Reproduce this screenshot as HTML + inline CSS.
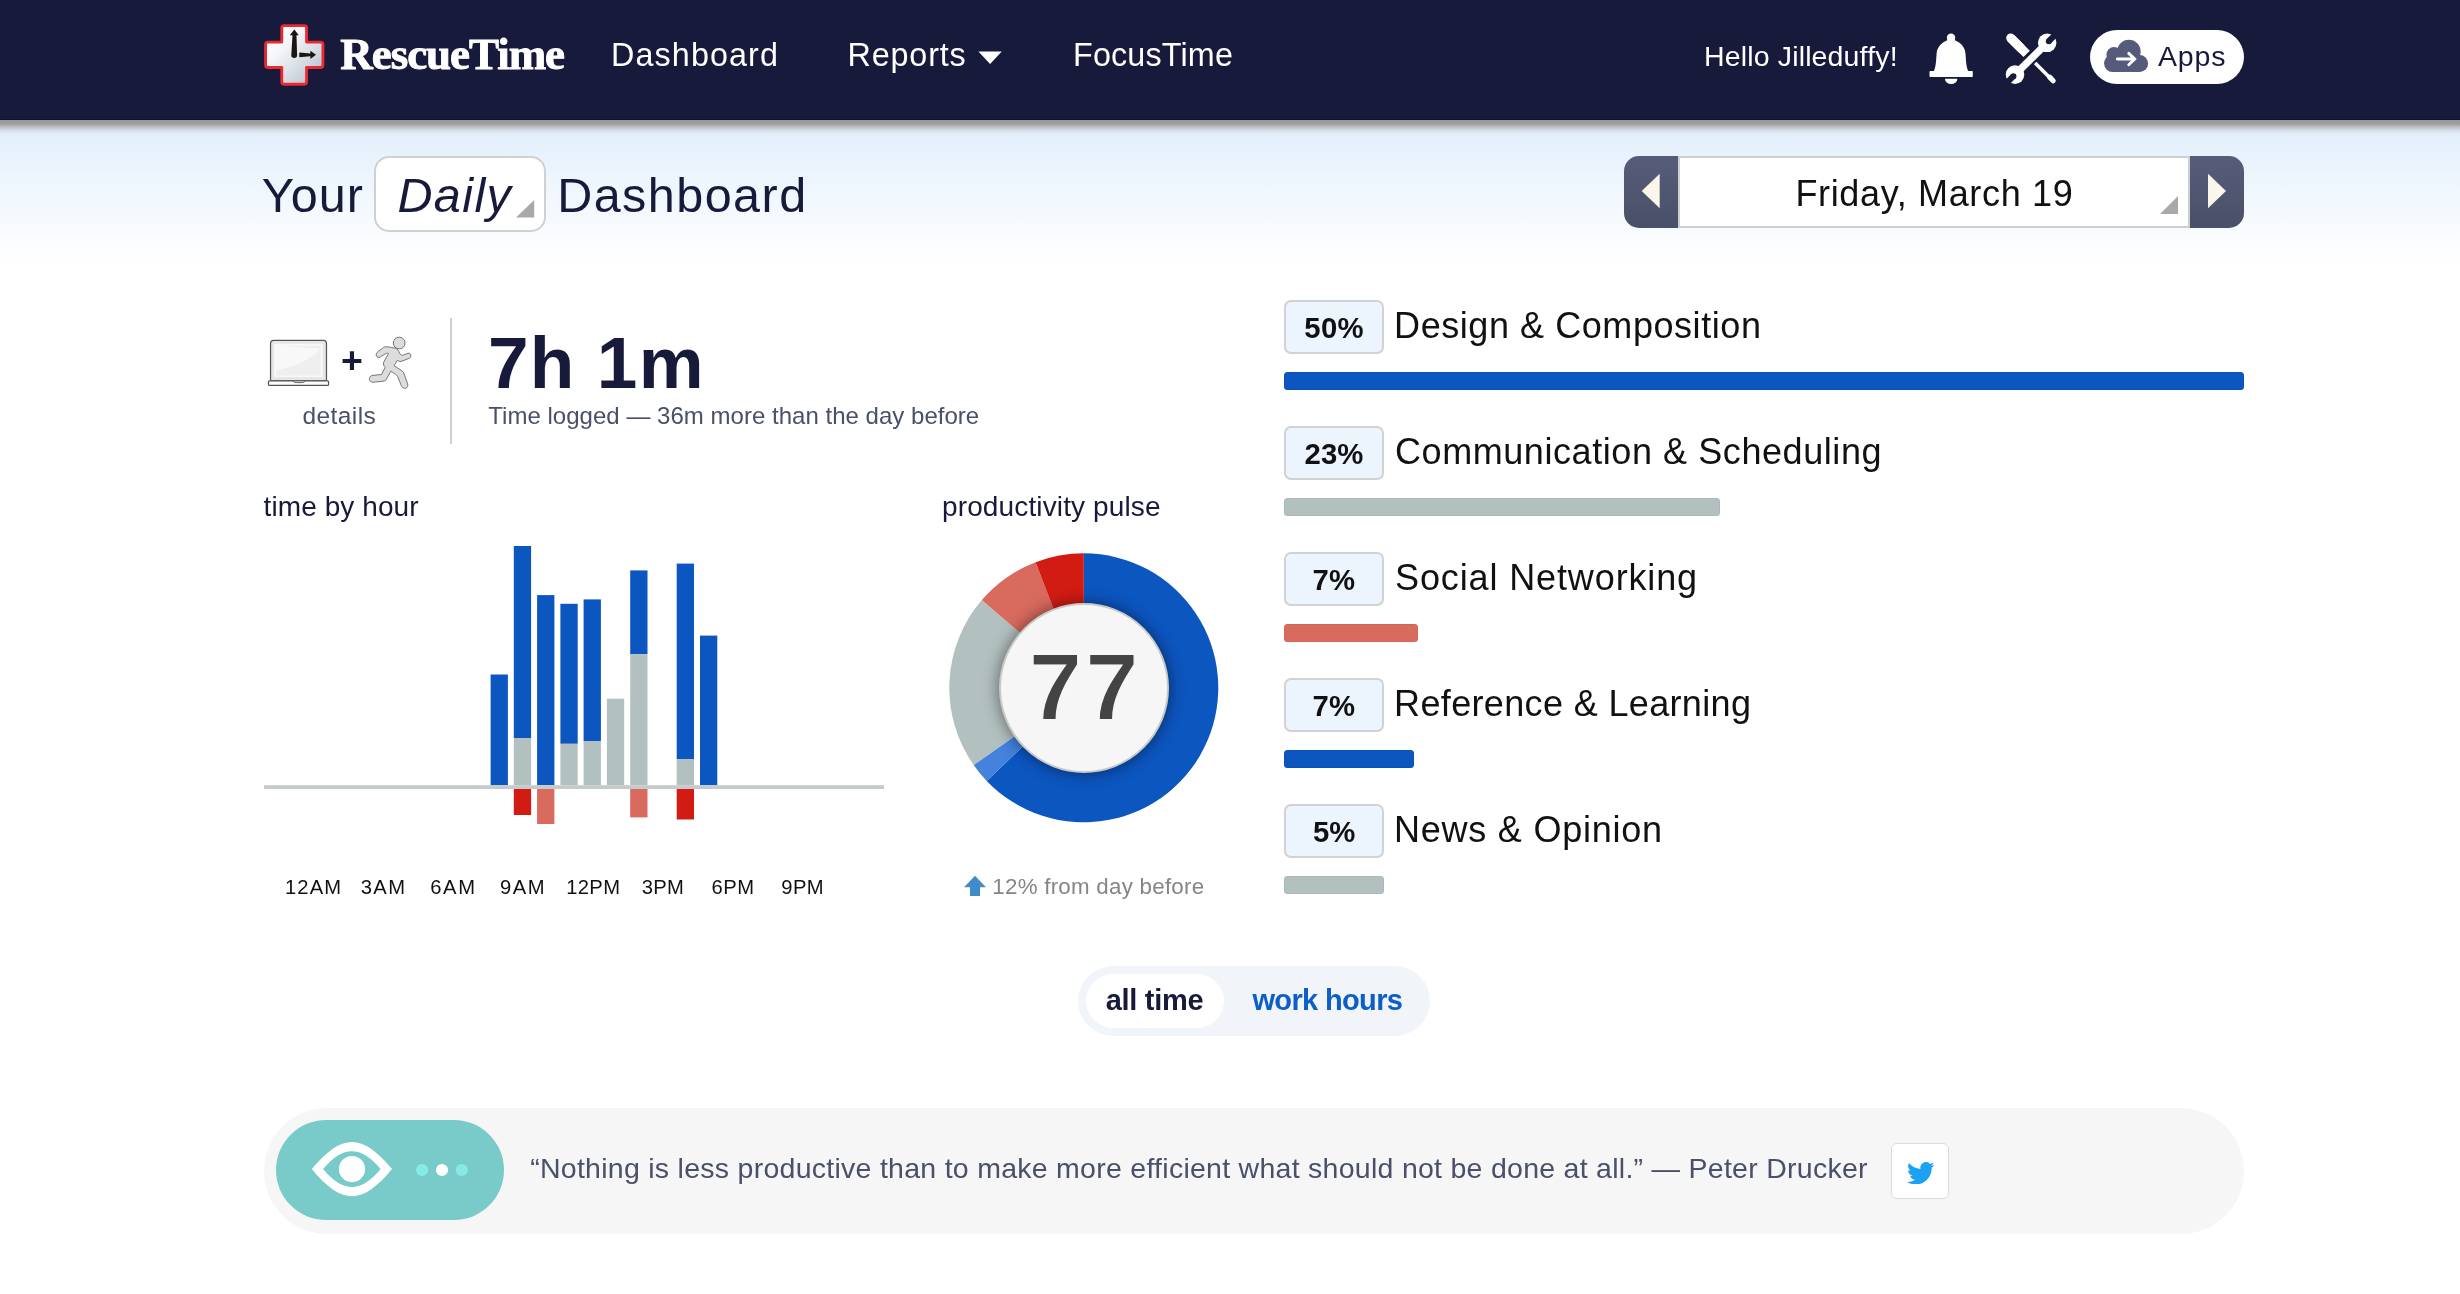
<!DOCTYPE html>
<html lang="en"><head><meta charset="utf-8"><title>RescueTime - Your Daily Dashboard</title>
<style>
*{box-sizing:border-box;margin:0;padding:0}
html,body{width:2460px;height:1294px;overflow:hidden;background:#fff}
body{position:relative;font-family:"Liberation Sans",sans-serif;
 background:linear-gradient(to bottom,#e4f0fc 0,#e4f0fc 136px,#fff 262px,#fff 100%)}
.a{position:absolute}
.t{position:absolute;white-space:pre;line-height:1;font-family:"Liberation Sans",sans-serif;font-weight:normal;margin:0;text-decoration:none;quotes:none}
.layer{position:absolute;left:0;top:0;width:2460px;height:1294px;will-change:transform;pointer-events:none}
h1{font:inherit;margin:0}
#hdr{left:0;top:0;width:2460px;height:120px;background:#171a3a;border-bottom:1px solid #0d1138}
#hsh{left:0;top:120px;width:2460px;height:17px;background:linear-gradient(to bottom,#999 0,#9c9d9d 23.5%,#b3b6b8 35%,#c3c8d2 47%,#d6dfe8 62%,#e0ebf5 78%,#e4f0fc 100%)}
.badge{left:1284px;width:100px;height:54px;border:2px solid #d2d2d2;border-radius:7px;background:#ecf5fe}
.cbar{left:1284px;height:18px;border-radius:3.5px;box-shadow:inset 0 0 0 1px rgba(0,0,0,.04)}

</style></head>
<body>
<header>
<div id="hdr" class="a"></div>
<div id="hsh" class="a"></div>
<!-- logo -->
<svg class="a" style="left:256px;top:16px" width="80" height="80" viewBox="0 0 1294 1294">
 <defs>
  <linearGradient id="lg" x1="0.1" y1="0.1" x2="0.9" y2="0.9"><stop offset="0" stop-color="#ffffff"/><stop offset=".3" stop-color="#f4f6f8"/><stop offset=".6" stop-color="#dde2e8"/><stop offset="1" stop-color="#b9c2ce"/></linearGradient>
 </defs>
 <path d="M452 155H783A35 35 0 0 1 818 190V422H1048A35 35 0 0 1 1083 457V798A35 35 0 0 1 1048 833H818V1069A35 35 0 0 1 783 1104H452A35 35 0 0 1 417 1069V833H190A35 35 0 0 1 155 798V457A35 35 0 0 1 190 422H417V190A35 35 0 0 1 452 155z" fill="url(#lg)" stroke="#ec2830" stroke-width="46" stroke-linejoin="round"/>
 <path d="M620 220L692 312H655L665 640A47 38 0 0 1 571 640L590 312H546z" fill="#1a1512"/>
 <path d="M700 590L880 607V563L970 628L880 697V652L700 666z" fill="#1a1512"/>
</svg>

<!-- reports caret -->
<svg class="a" style="left:977px;top:50px" width="28" height="18" viewBox="977 50 28 18"><path d="M978.400 51.600h23.400l-11.700 12.400z" fill="#fff"/></svg>

<!-- bell -->
<svg class="a" style="left:1916px;top:25px" width="70" height="70" viewBox="0 0 1294 1294">
 <g fill="#fff">
  <circle cx="648" cy="236" r="78"/>
  <path d="M578 262C580 285 572 296 540 305L756 305C724 296 716 285 718 262z"/>
  <path d="M328 854C372 770 372 640 380 540C388 420 455 335 572 288L724 288C841 335 908 420 916 540C924 640 924 770 968 854z"/>
  <rect x="250" y="850" width="800" height="112" rx="14"/>
  <path d="M535 995h230a115 97 0 0 1-230 0z"/>
 </g>
</svg>

<!-- tools -->
<svg class="a" style="left:1995px;top:25px" width="70" height="70" viewBox="0 0 1294 1294">
 <g fill="none">
  <path d="M290 240L480 430" stroke="#fff" stroke-width="166" stroke-linecap="round"/>
  <path d="M290 240L585 535" stroke="#fff" stroke-width="166"/>
  <path d="M742 702L1010 970" stroke="#fff" stroke-width="64"/>
  <path d="M1010 965L1075 1030" stroke="#fff" stroke-width="96" stroke-linecap="round"/>
  <path d="M370 917L965 330" stroke="#fff" stroke-width="133"/>
 </g>
 <circle cx="965" cy="330" r="171" fill="#fff"/>
 <circle cx="995" cy="300" r="56" fill="#171a3a"/>
 <path d="M995 300L1140 155" stroke="#171a3a" stroke-width="112"/>
 <circle cx="370" cy="917" r="172" fill="#fff"/>
 <circle cx="340" cy="947" r="56" fill="#171a3a"/>
 <path d="M340 947L195 1092" stroke="#171a3a" stroke-width="112"/>
</svg>

<!-- apps button -->
<div class="a" style="left:2090px;top:30px;width:154px;height:54px;border-radius:27px;background:#fff"></div>
<svg class="a" style="left:2085px;top:25px" width="170" height="65" viewBox="0 0 2460 941">
 <g fill="#565b7b">
  <circle cx="635" cy="385" r="170"/>
  <circle cx="420" cy="430" r="110"/>
  <circle cx="400" cy="555" r="125"/>
  <circle cx="790" cy="556" r="123"/>
  <rect x="400" y="400" width="390" height="280"/>
 </g>
 <path d="M468 492h245M633 411l86 81-86 84" stroke="#fff" stroke-width="42" fill="none" stroke-linecap="round" stroke-linejoin="miter"/>
</svg>
<nav class="layer">
<a class="t" style="left:340.3px;top:31.8px;font-size:45px;color:#fff;font-weight:bold;font-family:'Liberation Serif', serif;-webkit-text-stroke:0.9px #fff;letter-spacing:-1.04px;">RescueTime</a>
<a class="t" style="left:611.0px;top:38.8px;font-size:32.3px;color:#fff;letter-spacing:1.12px;">Dashboard</a>
<a class="t" style="left:847.6px;top:38.8px;font-size:32.3px;color:#fff;letter-spacing:0.84px;">Reports</a>
<a class="t" style="left:1073.0px;top:38.8px;font-size:32.3px;color:#fff;letter-spacing:0.17px;">FocusTime</a>
<span class="t" style="left:1704.0px;top:42.0px;font-size:28.5px;color:#fff;letter-spacing:0.15px;">Hello Jilleduffy!</span>
<a class="t" style="left:2157.9px;top:41.7px;font-size:28.5px;color:#171a3a;letter-spacing:0.92px;">Apps</a>
</nav>
</header>
<main>
<section id="titlebar">
<!-- daily select -->
<div class="a" style="left:374px;top:156px;width:171.500px;height:75.500px;border:2px solid #d0d0d0;border-radius:15px;background:#fff"></div>
<svg class="a" style="left:514px;top:198px" width="22" height="22" viewBox="514 198 22 22"><path d="M534.200 200v17.500H516z" fill="#a9a9a9"/></svg>

<!-- date picker -->
<div class="a" style="left:1624px;top:156px;width:54px;height:72px;border-radius:15px 0 0 15px;background:linear-gradient(#575c79,#4a4f69)"></div>
<div class="a" style="left:2190px;top:156px;width:54px;height:72px;border-radius:0 15px 15px 0;background:linear-gradient(#575c79,#4a4f69)"></div>
<div class="a" style="left:1678px;top:156px;width:512px;height:72px;border:2px solid #cfcfcf;border-left-width:2px;border-right-width:2px;background:#fff"></div>
<svg class="a" style="left:1624px;top:156px" width="620" height="72" viewBox="1624 156 620 72">
 <path d="M1659.700 173.800v34.400l-18-17.200z" fill="#fbf6ea"/>
 <path d="M2208 173.800v34.400l18-17.200z" fill="#fbf6ea"/>
 <path d="M2178 196v18h-18z" fill="#a9a9a9"/>
</svg>
<div class="layer">
<h1>
<span class="t" style="left:261.8px;top:170.9px;font-size:48.5px;color:#171a3a;letter-spacing:1.04px;">Your</span>
<span class="t" style="left:397.4px;top:170.9px;font-size:48.5px;color:#171a3a;font-style:italic;letter-spacing:1.42px;">Daily</span>
<span class="t" style="left:557.2px;top:170.9px;font-size:48.5px;color:#171a3a;letter-spacing:1.46px;">Dashboard</span>
</h1>
<span class="t" style="left:1795.4px;top:175.5px;font-size:36px;color:#111;letter-spacing:0.66px;">Friday, March 19</span>
</div>
</section>
<section id="summary">
<!-- laptop + runner -->
<svg class="a" style="left:260px;top:325px" width="160" height="75" viewBox="0 0 2460 1153">
 <defs><linearGradient id="sc" x1="0" y1="0" x2="1" y2="1"><stop offset="0" stop-color="#fdfdfd"/><stop offset=".55" stop-color="#f9f9f9"/><stop offset=".56" stop-color="#eeeeee"/><stop offset="1" stop-color="#efefef"/></linearGradient></defs>
 <path d="M162 855V285a50 50 0 0 1 50-50h760a50 50 0 0 1 50 50v570z" fill="#e6e6e6" stroke="#555" stroke-width="19"/>
 <rect x="215" y="290" width="750" height="510" rx="14" fill="#f8f8f8"/>
 <path d="M245 320h690v455H245V690C560 640 800 520 935 360z" fill="#efefef"/>
 <rect x="130" y="858" width="924" height="72" rx="16" fill="#fff" stroke="#555" stroke-width="19"/>
 <path d="M510 858h180c-5 25-30 28-90 28s-85-3-90-28z" fill="#ddd" stroke="#555" stroke-width="14"/>
 <g fill="#dcdcdc" stroke="#555" stroke-width="12" stroke-linejoin="round">
  <circle cx="2140" cy="277" r="90"/>
  <path d="M2060 352C2105 360 2125 380 2135 410C2150 440 2165 465 2185 468L2275 435C2305 428 2325 450 2320 480C2318 500 2300 510 2280 518L2170 560C2145 565 2125 555 2115 540L2062 625L2170 695C2200 715 2215 745 2225 780L2270 905C2285 960 2240 985 2205 970C2185 960 2175 940 2165 915L2120 800C2105 770 2080 750 2010 712L1945 830C1935 850 1920 860 1890 865L1745 880C1700 885 1675 850 1682 820C1688 790 1705 778 1735 774L1868 762L1925 652C1905 630 1890 610 1900 575L1975 440C1965 432 1950 430 1935 438L1850 492C1820 510 1790 495 1786 460C1784 440 1795 425 1815 410L1900 345C1925 325 1960 335 2060 352z"/>
 </g>
</svg>
<div class="a" style="left:450px;top:318px;width:2px;height:126px;background:#cfcfcf"></div>
<div class="layer">
<a class="t" style="left:302.4px;top:404.1px;font-size:24.5px;color:#4a4f6a;letter-spacing:0.44px;">details</a>
<span class="t" style="left:341.1px;top:341.9px;font-size:37.5px;color:#171a3a;font-weight:bold;">+</span>
<strong class="t" style="left:487.9px;top:326.4px;font-size:73px;color:#171a3a;font-weight:bold;letter-spacing:1.17px;">7h 1m</strong>
<p class="t" style="left:488.3px;top:403.7px;font-size:24px;color:#4a4f6a;letter-spacing:0.02px;">Time logged — 36m more than the day before</p>
</div>
</section>
<section id="charts">
<svg class="a" style="left:940px;top:545px" width="290" height="290" viewBox="940 545 290 290">
 <path d="M1083.8 687.8L1083.8 553.3A134.5 134.5 0 1 1 986.7 780.9z" fill="#0c56c0"/>
 <path d="M1083.8 687.8L986.7 780.9A134.5 134.5 0 0 1 973.6 764.9z" fill="#4482dd"/>
 <path d="M1083.8 687.8L973.6 764.9A134.5 134.5 0 0 1 981.8 600.1z" fill="#b2c0bf"/>
 <path d="M1083.8 687.8L981.8 600.1A134.5 134.5 0 0 1 1035.6 562.2z" fill="#d96a5e"/>
 <path d="M1083.8 687.8L1035.6 562.2A134.5 134.5 0 0 1 1083.8 553.3z" fill="#d21c13"/>
</svg>
<div class="a" style="left:998.8px;top:602.8px;width:170px;height:170px;border-radius:50%;background:#f6f6f6;border:2px solid #c9c9c9;box-shadow:0 0 16px rgba(0,0,0,.5)"></div>
<svg class="a" style="left:264px;top:540px" width="620" height="290" viewBox="264 540 620 290">
 <rect x="490.6" y="674.5" width="17.3" height="110.7" fill="#0c56c0"/>
 <rect x="513.8" y="546.0" width="17.3" height="192.0" fill="#0c56c0"/>
 <rect x="513.8" y="738.0" width="17.3" height="47.2" fill="#b2c0bf"/>
 <rect x="513.8" y="789.0" width="17.3" height="26.0" fill="#d21c13"/>
 <rect x="537.1" y="595.1" width="17.3" height="190.1" fill="#0c56c0"/>
 <rect x="537.1" y="789.0" width="17.3" height="35.0" fill="#d96a5e"/>
 <rect x="560.4" y="603.8" width="17.3" height="140.0" fill="#0c56c0"/>
 <rect x="560.4" y="743.8" width="17.3" height="41.4" fill="#b2c0bf"/>
 <rect x="583.6" y="599.4" width="17.3" height="141.6" fill="#0c56c0"/>
 <rect x="583.6" y="741.0" width="17.3" height="44.2" fill="#b2c0bf"/>
 <rect x="606.9" y="698.7" width="17.3" height="86.5" fill="#b2c0bf"/>
 <rect x="630.2" y="570.4" width="17.3" height="83.8" fill="#0c56c0"/>
 <rect x="630.2" y="654.2" width="17.3" height="131.0" fill="#b2c0bf"/>
 <rect x="630.2" y="789.0" width="17.3" height="28.4" fill="#d96a5e"/>
 <rect x="676.7" y="563.6" width="17.3" height="195.4" fill="#0c56c0"/>
 <rect x="676.7" y="759.0" width="17.3" height="26.2" fill="#b2c0bf"/>
 <rect x="676.7" y="789.0" width="17.3" height="30.5" fill="#d21c13"/>
 <rect x="700.0" y="635.6" width="17.3" height="149.6" fill="#0c56c0"/>
 <rect x="264" y="785.200" width="620" height="3.800" fill="#c5cbcb"/>
</svg>

<!-- pulse arrow -->
<svg class="a" style="left:962px;top:874px" width="26" height="24" viewBox="962 874 26 24"><path d="M975 875.800l11 11.400h-6v8.900h-10v-8.900h-6z" fill="#428bca"/></svg>
<div class="layer">
<h2 class="t" style="left:263.6px;top:492.8px;font-size:28px;color:#171a3a;letter-spacing:0.08px;">time by hour</h2>
<span class="t" style="left:284.9px;top:876.8px;font-size:20.2px;color:#111;letter-spacing:1.16px;">12AM</span>
<span class="t" style="left:360.7px;top:876.8px;font-size:20.2px;color:#111;letter-spacing:1.43px;">3AM</span>
<span class="t" style="left:430.2px;top:876.8px;font-size:20.2px;color:#111;letter-spacing:1.64px;">6AM</span>
<span class="t" style="left:500.0px;top:876.8px;font-size:20.2px;color:#111;letter-spacing:1.57px;">9AM</span>
<span class="t" style="left:566.2px;top:876.8px;font-size:20.2px;color:#111;letter-spacing:0.35px;">12PM</span>
<span class="t" style="left:641.7px;top:876.8px;font-size:20.2px;color:#111;letter-spacing:0.32px;">3PM</span>
<span class="t" style="left:711.4px;top:876.8px;font-size:20.2px;color:#111;letter-spacing:0.55px;">6PM</span>
<span class="t" style="left:781.3px;top:876.8px;font-size:20.2px;color:#111;letter-spacing:0.40px;">9PM</span>
<h2 class="t" style="left:942.0px;top:492.8px;font-size:28px;color:#171a3a;letter-spacing:0.13px;">productivity pulse</h2>
<strong class="t" style="left:1028.9px;top:640.0px;font-size:95px;color:#444;font-weight:bold;letter-spacing:3.80px;-webkit-text-stroke:1.2px #f7f7f7;">77</strong>
<span class="t" style="left:992.3px;top:875.5px;font-size:22.3px;color:#858585;letter-spacing:0.27px;">12% from day before</span>
</div>
</section>
<section id="categories">
<!-- category bars -->
<div class="a badge" style="top:300px"></div><div class="a cbar" style="top:372px;width:960px;background:#0c56c0"></div>
<div class="a badge" style="top:426px"></div><div class="a cbar" style="top:498px;width:436px;background:#b2c0bf"></div>
<div class="a badge" style="top:552px"></div><div class="a cbar" style="top:624px;width:134px;background:#d96a5e"></div>
<div class="a badge" style="top:678px"></div><div class="a cbar" style="top:750px;width:130px;background:#0c56c0"></div>
<div class="a badge" style="top:804px"></div><div class="a cbar" style="top:876px;width:100px;background:#b2c0bf"></div>
<div class="layer">
<a class="t" style="left:1394.1px;top:307.5px;font-size:36px;color:#111;letter-spacing:0.56px;">Design &amp; Composition</a>
<b class="t" style="left:1304.3px;top:313.2px;font-size:29.3px;color:#111;font-weight:bold;letter-spacing:0.32px;">50%</b>
<a class="t" style="left:1395.0px;top:433.5px;font-size:36px;color:#111;letter-spacing:0.57px;">Communication &amp; Scheduling</a>
<b class="t" style="left:1304.6px;top:439.2px;font-size:29.3px;color:#111;font-weight:bold;letter-spacing:0.08px;">23%</b>
<a class="t" style="left:1395.1px;top:559.5px;font-size:36px;color:#111;letter-spacing:0.87px;">Social Networking</a>
<b class="t" style="left:1312.6px;top:565.2px;font-size:29.3px;color:#111;font-weight:bold;letter-spacing:0.19px;">7%</b>
<a class="t" style="left:1394.1px;top:685.5px;font-size:36px;color:#111;letter-spacing:0.35px;">Reference &amp; Learning</a>
<b class="t" style="left:1312.6px;top:691.2px;font-size:29.3px;color:#111;font-weight:bold;letter-spacing:0.19px;">7%</b>
<a class="t" style="left:1394.1px;top:811.5px;font-size:36px;color:#111;letter-spacing:0.75px;">News &amp; Opinion</a>
<b class="t" style="left:1312.9px;top:817.2px;font-size:29.3px;color:#111;font-weight:bold;letter-spacing:-0.05px;">5%</b>
</div>
</section>
<section id="timefilter">
<!-- toggle -->
<div class="a" style="left:1078px;top:966px;width:352px;height:70px;border-radius:35px;background:#f1f5f9"></div>
<div class="a" style="left:1086px;top:974px;width:138px;height:54px;border-radius:27px;background:#fff"></div>
<div class="layer">
<a class="t" style="left:1105.8px;top:985.8px;font-size:29px;color:#171a3a;font-weight:bold;letter-spacing:-0.31px;">all time</a>
<a class="t" style="left:1252.4px;top:985.8px;font-size:29px;color:#0c5ec8;font-weight:bold;letter-spacing:-0.64px;">work hours</a>
</div>
</section>
</main>
<footer>
<!-- quote bar -->
<div class="a" style="left:264px;top:1108px;width:1980px;height:125.500px;border-radius:63px;background:#f6f6f6"></div>
<div class="a" style="left:276px;top:1120px;width:228px;height:100px;border-radius:50px;background:#79cbc9"></div>
<svg class="a" style="left:300px;top:1130px" width="190" height="80" viewBox="300 1130 190 80">
 <path d="M311.800 1169.100C341.800 1132.800 362 1132.800 392 1169.100C362 1205.400 341.800 1205.400 311.800 1169.100z" fill="#fff"/>
 <path d="M323 1169.100C343 1145.200 360.700 1145.200 380.700 1169.100C360.700 1193 343 1193 323 1169.100z" fill="#79cbc9"/>
 <circle cx="352" cy="1169.100" r="13.100" fill="#fff"/>
 <circle cx="422.100" cy="1170" r="6.100" fill="#86ebe4"/>
 <circle cx="442" cy="1170" r="6.100" fill="#fff"/>
 <circle cx="461.800" cy="1170" r="6.100" fill="#86ebe4"/>
</svg>
<div class="a" style="left:1891px;top:1143px;width:58px;height:56px;border:1px solid #dcdcdc;border-radius:6px;background:#fff"></div>
<svg class="a" style="left:1906.500px;top:1161.500px" width="27.500" height="22.500" viewBox="0 0 24 19.500"><path d="M24 2.300a9.800 9.800 0 0 1-2.800.8A4.900 4.900 0 0 0 23.300.4a9.900 9.900 0 0 1-3.100 1.200A4.900 4.900 0 0 0 11.800 6 14 14 0 0 1 1.700.9a4.900 4.900 0 0 0 1.500 6.600A4.900 4.900 0 0 1 1 6.900v.1a4.900 4.900 0 0 0 3.900 4.800 4.900 4.900 0 0 1-2.200.1 4.900 4.900 0 0 0 4.600 3.400A9.900 9.900 0 0 1 0 17.300a14 14 0 0 0 7.500 2.200c9 0 14-7.500 14-14v-.600A10 10 0 0 0 24 2.300z" fill="#1da1f2"/></svg>
<div class="layer">
<blockquote class="t" style="left:530.2px;top:1154.2px;font-size:28.5px;color:#4a4f6a;letter-spacing:0.27px;">“Nothing is less productive than to make more efficient what should not be done at all.” — Peter Drucker</blockquote>
</div>
</footer>

</body></html>
